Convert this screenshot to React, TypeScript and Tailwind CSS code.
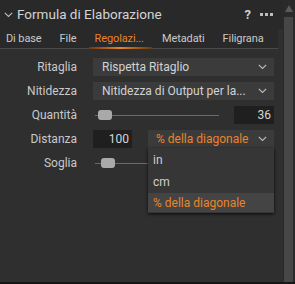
import React from "react";

const Chevron = ({ className = "" }: { className?: string }) => (
  <svg width="9" height="6" viewBox="0 0 9 6" className={className}>
    <path d="M0.8 0.8 L4.5 4.5 L8.2 0.8" fill="none" stroke="currentColor" strokeWidth="1.1" />
  </svg>
);

const Slider = ({ thumb }: { thumb: number }) => (
  <div className="relative h-[18px] w-[124px] ml-[2px] shrink-0">
    <div className="absolute left-0 right-0 top-[9px] h-px bg-[#6a6a6a]" />
    <div
      className="absolute top-[4px] h-[10px] w-[14px] rounded-[3px] bg-[#a9a9a9]"
      style={{ left: thumb }}
    />
  </div>
);

export default function App() {
  const font = { fontFamily: 'Roboto, "Noto Sans", sans-serif' };
  return (
    <div
      className="w-[295px] h-[284px] bg-[#2e2e2e] flex flex-col overflow-hidden text-[#c9c9c9] relative"
      style={font}
    >
      <div className="flex flex-1 min-h-0">
        <div className="flex-1 min-w-0 overflow-hidden flex flex-col bg-[#2f2f2f]">
          {/* header */}
          <div className="h-[29px] flex items-center bg-[#292929] pl-[4px] pr-[10px]">
            <Chevron className="text-[#bdbdbd] mr-[4px]" />
            <span className="text-[13.5px] leading-none text-[#d4d4d4] whitespace-nowrap">
              Formula di Elaborazione
            </span>
            <span className="ml-auto text-[13px] font-bold text-[#d0d0d0] leading-none mr-[9px]">?</span>
            <span className="flex gap-[2px] items-center">
              <span className="w-[3px] h-[3px] bg-[#bdbdbd]" />
              <span className="w-[3px] h-[3px] bg-[#bdbdbd]" />
              <span className="w-[3px] h-[3px] bg-[#bdbdbd]" />
            </span>
          </div>
          {/* tabs */}
          <div className="h-[20px] flex items-center gap-[18px] pl-[6px] border-b border-[#4a4a4a] mr-[5px] bg-[#292929] text-[11px] tracking-[-0.1px] leading-none whitespace-nowrap">
            <span className="shrink-0">Di base</span>
            <span className="shrink-0">File</span>
            <span className="shrink-0 relative text-[#e8842c] h-full flex items-center">
              Regolazi...
              <span className="absolute left-[-5px] right-[-8px] bottom-[-1px] h-[2px] bg-gradient-to-r from-[#6b3a10] via-[#e8842c] to-[#6b3a10]" />
            </span>
            <span className="shrink-0">Metadati</span>
            <span className="shrink-0">Filigrana</span>
          </div>
          {/* body */}
          <div className="relative flex flex-col gap-[6px] pt-[9px] pr-[9px] text-[12px] whitespace-nowrap">
            <div className="grid grid-cols-[77px_1fr] gap-x-[16px] items-center">
              <span className="text-right">Ritaglia</span>
              <div className="h-[18px] bg-[#3b3b3b] flex items-center pl-[9px] pr-[7px] text-[#d2d2d2]">
                <span className="flex-1">Rispetta Ritaglio</span>
                <Chevron className="text-[#bdbdbd]" />
              </div>
            </div>
            <div className="grid grid-cols-[77px_1fr] gap-x-[16px] items-center">
              <span className="text-right">Nitidezza</span>
              <div className="h-[18px] bg-[#3b3b3b] flex items-center pl-[9px] pr-[7px] text-[#d2d2d2]">
                <span className="flex-1 overflow-hidden">Nitidezza di Output per la...</span>
                <Chevron className="text-[#bdbdbd] shrink-0" />
              </div>
            </div>
            <div className="grid grid-cols-[77px_1fr] gap-x-[16px] items-center">
              <span className="text-right">Quantità</span>
              <div className="flex items-center">
                <Slider thumb={3} />
                <div className="ml-auto h-[18px] w-[40px] bg-[#1f1f1f] flex items-center justify-end pr-[3px] text-[#d6d6d6]">
                  36
                </div>
              </div>
            </div>
            <div className="grid grid-cols-[77px_1fr] gap-x-[16px] items-center">
              <span className="text-right">Distanza</span>
              <div className="flex items-center">
                <div className="h-[18px] w-[39px] bg-[#1f1f1f] flex items-center justify-end pr-[3px] text-[#d6d6d6]">
                  100
                </div>
                <div className="ml-auto h-[18px] w-[126px] bg-[#3b3b3b] flex items-center pl-[8px] pr-[7px] text-[#e8842c]">
                  <span className="flex-1">% della diagonale</span>
                  <Chevron className="text-[#bdbdbd]" />
                </div>
              </div>
            </div>
            <div className="grid grid-cols-[77px_1fr] gap-x-[16px] items-center">
              <span className="text-right">Soglia</span>
              <div className="flex items-center">
                <Slider thumb={6} />
              </div>
            </div>
            {/* dropdown menu */}
            <div className="absolute left-[148px] top-[99px] w-[126px] bg-[#363636] shadow-[0_1px_3px_rgba(0,0,0,0.8)] flex flex-col py-[1px] text-[12px]">
              <div className="h-[22px] flex items-center pl-[5px] text-[#cfcfcf]">in</div>
              <div className="h-[22px] flex items-center pl-[5px] text-[#cfcfcf]">cm</div>
              <div className="h-[19px] flex items-center pl-[5px] text-[#e8842c] bg-[#444444]">% della diagonale</div>
            </div>
          </div>
        </div>
        {/* scrollbar */}
        <div className="w-[12px] shrink-0 flex flex-col bg-[#2a2a2a] pl-[1px] pr-[2px]">
          <div className="h-[17px] flex items-start justify-center pt-[5px]">
            <div className="w-0 h-0 border-l-[4px] border-r-[4px] border-b-[7px] border-l-transparent border-r-transparent border-b-[#5a5a5a]" />
          </div>
          <div className="flex-1 bg-[#474747]" />
        </div>
      </div>
      <div className="h-[2px] bg-[#161616]" />
    </div>
  );
}
